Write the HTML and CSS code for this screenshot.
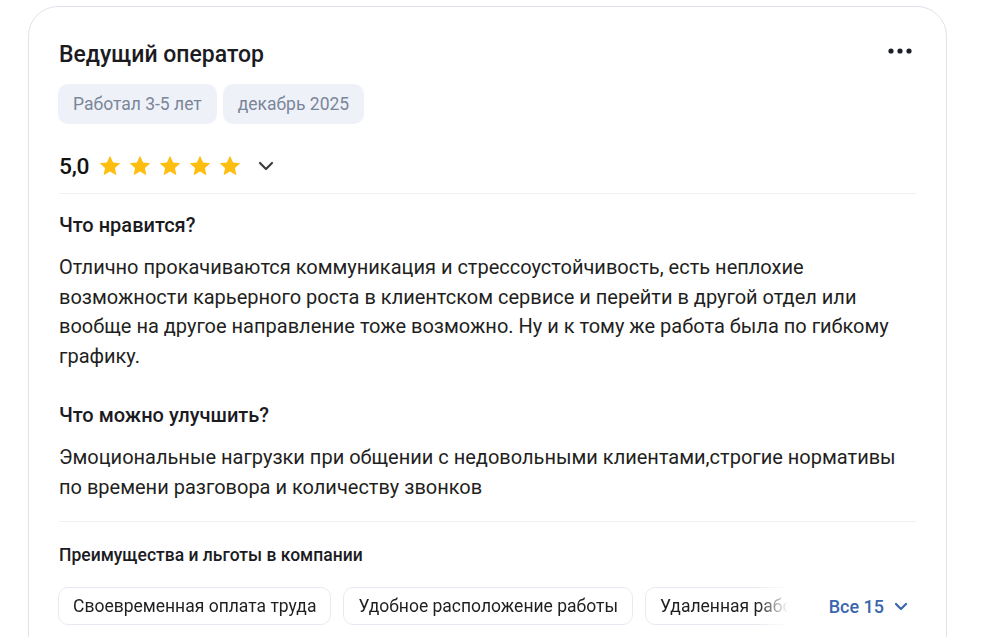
FILE: index.html
```html
<!DOCTYPE html>
<html lang="ru">
<head>
<meta charset="utf-8">
<title>Отзыв</title>
<link rel="stylesheet" href="styles.css">
</head>
<body>
<div class="card">
  <div class="head">
    <h2 class="title">Ведущий оператор</h2>
    <button class="more" aria-label="Ещё">
      <svg width="24" height="6" viewBox="0 0 24 6"><circle cx="3" cy="3" r="2.6" fill="#1b1f29"/><circle cx="12" cy="3" r="2.6" fill="#1b1f29"/><circle cx="21" cy="3" r="2.6" fill="#1b1f29"/></svg>
    </button>
  </div>
  <div class="tags">
    <span class="tag">Работал 3-5 лет</span>
    <span class="tag">декабрь 2025</span>
  </div>
  <div class="rating">
    <span class="score">5,0</span>
    <span class="stars">
      <svg class="star" viewBox="0 0 24 24"><path d="M12 1.8l3.1 6.6 7.2.8-5.4 4.9 1.5 7.1L12 17.6l-6.4 3.6 1.5-7.1-5.4-4.9 7.2-.8z"/></svg>
      <svg class="star" viewBox="0 0 24 24"><path d="M12 1.8l3.1 6.6 7.2.8-5.4 4.9 1.5 7.1L12 17.6l-6.4 3.6 1.5-7.1-5.4-4.9 7.2-.8z"/></svg>
      <svg class="star" viewBox="0 0 24 24"><path d="M12 1.8l3.1 6.6 7.2.8-5.4 4.9 1.5 7.1L12 17.6l-6.4 3.6 1.5-7.1-5.4-4.9 7.2-.8z"/></svg>
      <svg class="star" viewBox="0 0 24 24"><path d="M12 1.8l3.1 6.6 7.2.8-5.4 4.9 1.5 7.1L12 17.6l-6.4 3.6 1.5-7.1-5.4-4.9 7.2-.8z"/></svg>
      <svg class="star" viewBox="0 0 24 24"><path d="M12 1.8l3.1 6.6 7.2.8-5.4 4.9 1.5 7.1L12 17.6l-6.4 3.6 1.5-7.1-5.4-4.9 7.2-.8z"/></svg>
    </span>
    <svg class="chev" width="16" height="10" viewBox="0 0 16 10"><path d="M2 2l6 6 6-6" fill="none" stroke="#3d3d3d" stroke-width="2.2" stroke-linecap="round" stroke-linejoin="round"/></svg>
  </div>
  <div class="section">
    <h3 class="sub">Что нравится?</h3>
    <p class="text">Отлично прокачиваются коммуникация и стрессоустойчивость, есть неплохие возможности карьерного роста в клиентском сервисе и перейти в другой отдел или вообще на другое направление тоже возможно. Ну и к тому же работа была по гибкому графику.</p>
    <h3 class="sub sub-gap">Что можно улучшить?</h3>
    <p class="text">Эмоциональные нагрузки при общении с недовольными клиентами,строгие нормативы по времени разговора и количеству звонков</p>
  </div>
  <div class="benefits">
    <h4 class="bhead">Преимущества и льготы в компании</h4>
    <div class="brow">
      <div class="chips">
        <span class="chip">Своевременная оплата труда</span>
        <span class="chip">Удобное расположение работы</span>
        <span class="chip">Удаленная работа</span>
      </div>
      <button class="all">Все 15
        <svg width="14" height="9" viewBox="0 0 14 9"><path d="M2 2l5 5 5-5" fill="none" stroke="#3a66ad" stroke-width="2.2" stroke-linecap="round" stroke-linejoin="round"/></svg>
      </button>
    </div>
  </div>
</div>
</body>
</html>
```

FILE: styles.css
```css
* { box-sizing: border-box; }
html, body { margin: 0; padding: 0; background: #fff; }
body {
  font-family: Roboto, "Noto Sans", Arial, sans-serif;
  color: #1a1a1a;
  overflow: hidden;
  height: 637px;
}
.card {
  margin: 6px 0 0 28px;
  width: 919px;
  border: 1px solid #dfe3ea;
  border-radius: 30px;
  padding: 34px 30px 40px 30px;
  min-height: 700px;
}
.head {
  display: flex;
  justify-content: space-between;
  align-items: center;
}
.title {
  margin: 0;
  font-size: 23px;
  line-height: 28px;
  font-weight: 500;
  color: #1b1b1f;
}
.more {
  border: 0;
  background: none;
  padding: 0;
  margin-right: 4px;
  margin-top: -8px;
  display: flex;
  cursor: pointer;
}
.tags {
  display: flex;
  gap: 6px;
  margin-top: 15px;
  margin-left: -1px;
}
.tag {
  height: 40px;
  display: flex;
  align-items: center;
  padding: 0 15px;
  background: #eef1f8;
  border-radius: 10px;
  font-size: 17.5px;
  color: #7a8699;
}
.rating {
  display: flex;
  align-items: center;
  margin-top: 26px;
  height: 32px;
}
.score {
  font-size: 22.8px;
  font-weight: 500;
  color: #121212;
  letter-spacing: -0.3px;
}
.stars {
  display: flex;
  gap: 6px;
  margin-left: 9px;
}
.star {
  width: 24px;
  height: 24px;
  fill: #fdbe10;
}
.chev {
  margin-left: 16px;
}
.section {
  border-top: 1px solid #eff1f4;
  margin-top: 11px;
  padding-top: 17px;
}
.sub {
  margin: 0;
  font-size: 20px;
  line-height: 28px;
  font-weight: 500;
  color: #1b1b1f;
}
.sub-gap { margin-top: 29px; }
.text {
  margin: 14px 0 0;
  font-size: 20px;
  line-height: 29.7px;
  color: #1f1f22;
}
.benefits {
  border-top: 1px solid #eff1f4;
  margin-top: 19px;
  padding-top: 21px;
}
.bhead {
  margin: 0;
  font-size: 17.5px;
  line-height: 24px;
  font-weight: 500;
  color: #1b1b1f;
}
.brow {
  display: flex;
  align-items: center;
  margin-top: 20px;
}
.chips {
  display: flex;
  gap: 12px;
  width: 730px;
  overflow: hidden;
  margin-left: -1px;
  -webkit-mask-image: linear-gradient(to right, #000 700px, transparent 730px);
  mask-image: linear-gradient(to right, #000 700px, transparent 730px);
}
.chip {
  flex: none;
  height: 38px;
  display: flex;
  align-items: center;
  padding: 0 14px;
  border: 1px solid #e7eaf0;
  border-radius: 10px;
  font-size: 17.5px;
  color: #1f1f22;
  white-space: nowrap;
}
.all {
  margin-left: auto;
  margin-right: 8px;
  border: 0;
  background: none;
  padding: 0;
  display: flex;
  align-items: center;
  gap: 10px;
  font-family: inherit;
  font-size: 18px;
  font-weight: 500;
  color: #3a66ad;
  cursor: pointer;
}
```
